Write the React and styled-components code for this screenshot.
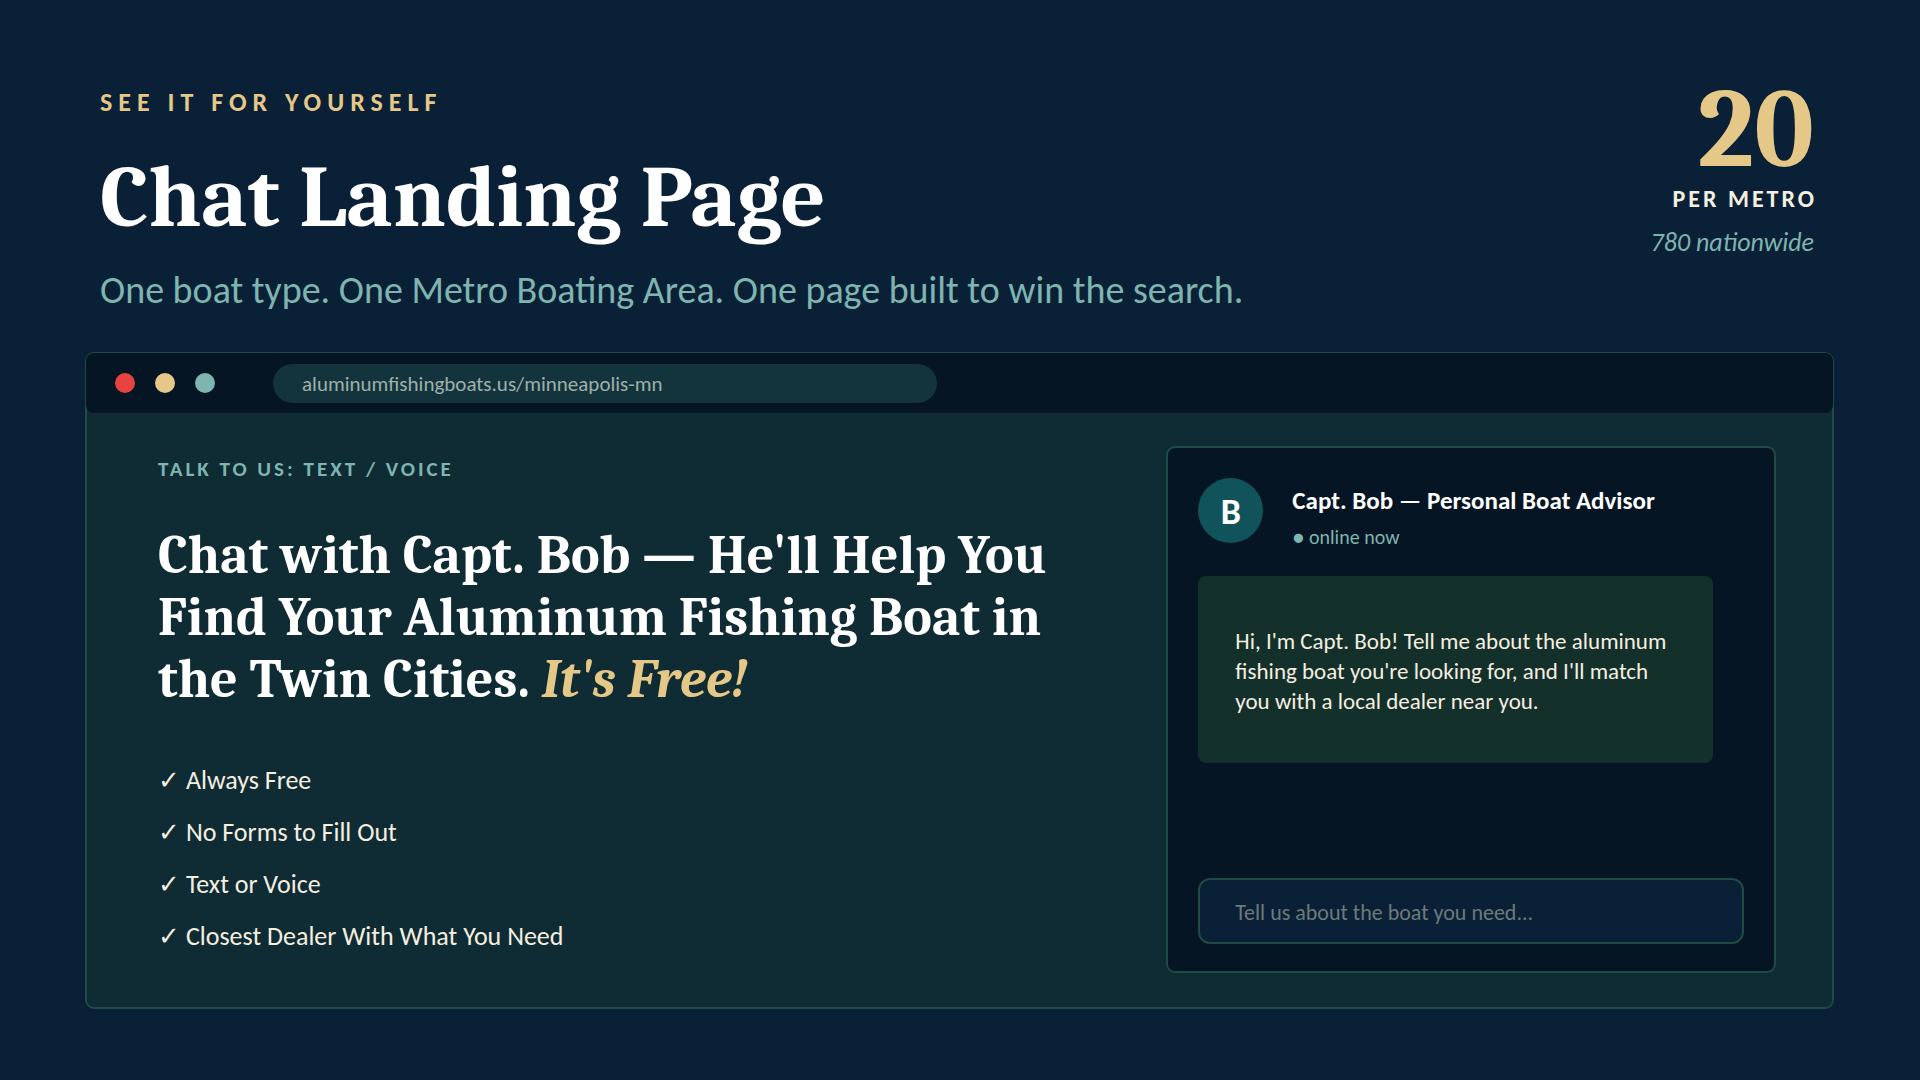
import React, {useState} from "react";
import styled, {createGlobalStyle} from "styled-components";

const GlobalStyle = createGlobalStyle`
    * {
        box-sizing: border-box;
    }

    body {
        margin: 0;
        background: #0a2036;
    }
`;

const sans = `Carlito, Calibri, Lato, sans-serif`;
const serif = `Caladea, Cambria, "Liberation Serif", serif`;

const Root = styled.div`
    display: flex;
    flex-direction: column;
    min-height: 100vh;
    padding: 76px 86px 71px 85px;

    background: #0a2036;
    color: #ffffff;
    font-family: ${sans};
`;

const Header = styled.header`
    display: flex;
    justify-content: space-between;
    padding: 0 20px 0 15px;
    margin-bottom: 39px;
`;

const Intro = styled.div`
    padding-top: 10px;
`;

const Kicker = styled.p`
    margin: 0;

    color: ${props => props.$gold ? "#e5c888" : "#7fb5b0"};
    font-size: ${props => props.$gold ? 26 : 21}px;
    font-weight: 700;
    line-height: ${props => props.$gold ? 32 : 28}px;
    letter-spacing: ${props => props.$gold ? 6 : 3}px;
`;

const Title = styled.h1`
    margin: 24px 0 13px;

    font-family: ${serif};
    font-size: 88px;
    font-weight: 700;
    line-height: 112px;
`;

const Subtitle = styled.p`
    margin: 0;

    color: #7fb5b0;
    font-size: 38px;
    line-height: 46px;
`;

const Stat = styled.div`
    display: flex;
    flex-direction: column;
    align-items: flex-end;
`;

const StatNumber = styled.div`
    color: #e5c888;
    font-family: ${serif};
    font-size: 112px;
    font-weight: 700;
    line-height: 108px;
`;

const StatLabel = styled.div`
    /* drops the space after the last letter */
    margin-right: -3px;

    color: #f5efe0;
    font-size: 24px;
    font-weight: 700;
    line-height: 30px;
    letter-spacing: 3px;
`;

const StatNote = styled.div`
    margin-top: 12px;

    color: #7fb5b0;
    font-size: 26px;
    font-style: italic;
    line-height: 32px;
`;

const Browser = styled.main`
    display: flex;
    flex: 1;
    flex-direction: column;

    background: #0f2b33;
    border: 2px solid #1f4a45;
    border-radius: 9px;
`;

const BrowserBar = styled.div`
    display: flex;
    align-items: center;
    height: 60px;
    margin: -1px -1px 0;

    background: #051523;
    border-radius: 8px;
`;

const Lights = styled.div`
    display: flex;
    gap: 20px;
    margin: 0 58px 0 29px;
`;

const Dot = styled.span`
    width: 20px;
    height: 20px;

    background: ${props => props.$color};
    border-radius: 50%;
`;

const Address = styled.input`
    width: 38%;
    height: 39px;
    padding: 2px 29px 0;

    background: #14343d;
    border: 0;
    border-radius: 20px;
    color: #9fb0a9;
    font-family: ${sans};
    font-size: 21px;
    outline: none;
`;

const Page = styled.div`
    display: grid;
    flex: 1;
    grid-template-columns: 14fr 9fr;
    gap: 60px;
    padding: 33px 56px 34px 71px;
`;

const Pitch = styled.section`
    padding-top: 9px;
`;

const Headline = styled.h2`
    max-width: 920px;
    margin: 42px 0 43px;

    font-family: ${serif};
    font-size: 54px;
    font-weight: 700;
    line-height: 62px;

    em {
        color: #e5c888;
    }
`;

const Checklist = styled.ul`
    margin: 0;
    padding: 0;

    color: #f5efe0;
    font-size: 26px;
    line-height: 52px;
    list-style: none;
`;

const Chat = styled.section`
    display: flex;
    flex-direction: column;
    padding: 30px 30px 27px;

    background: #051523;
    border: 2px solid #1f4a45;
    border-radius: 9px;
`;

const Advisor = styled.div`
    display: flex;
    gap: 29px;
`;

const Avatar = styled.div`
    display: flex;
    align-items: center;
    justify-content: center;
    width: 65px;
    height: 65px;
    padding-top: 2px;

    background: #10535a;
    border-radius: 50%;
    font-size: 36px;
    font-weight: 700;
`;

const AdvisorText = styled.div`
    padding-top: 8px;
`;

const AdvisorName = styled.h3`
    margin: 0 0 8px;

    font-size: 25px;
    font-weight: 700;
    line-height: 30px;
`;

const Status = styled.p`
    margin: 0;

    color: #7fb5b0;
    font-size: 20px;
    line-height: 26px;
`;

const Message = styled.div`
    display: flex;
    align-items: center;
    min-height: 187px;
    margin: 26px 31px 0 0;
    padding: 2px 37px 0;

    background: #14302b;
    border-radius: 8px;
    color: #f5efe0;
    font-size: 23px;
    line-height: 30px;
`;

const ChatInput = styled.input`
    width: 100%;
    height: 66px;
    margin-top: auto;
    padding: 2px 35px 0;

    background: #0a2036;
    border: 2px solid #1f4a45;
    border-radius: 12px;
    color: #f5efe0;
    font-family: ${sans};
    font-size: 22px;
    outline: none;

    &::placeholder {
        color: #6c7b7a;
        opacity: 1;
    }
`;

const benefits = [
    "Always Free",
    "No Forms to Fill Out",
    "Text or Voice",
    "Closest Dealer With What You Need",
];

export default function App() {

    const [text, setText] = useState("");

    return (
        <Root>
            <GlobalStyle/>

            <Header>
                <Intro>
                    <Kicker $gold>SEE IT FOR YOURSELF</Kicker>
                    <Title>Chat Landing Page</Title>
                    <Subtitle>One boat type. One Metro Boating Area. One page built to win the search.</Subtitle>
                </Intro>

                <Stat>
                    <StatNumber>20</StatNumber>
                    <StatLabel>PER METRO</StatLabel>
                    <StatNote>780 nationwide</StatNote>
                </Stat>
            </Header>

            <Browser>
                <BrowserBar>
                    <Lights>
                        <Dot $color="#e84340"/>
                        <Dot $color="#e5c888"/>
                        <Dot $color="#7fb5b0"/>
                    </Lights>
                    <Address aria-label="Address" readOnly value="aluminumfishingboats.us/minneapolis-mn"/>
                </BrowserBar>

                <Page>
                    <Pitch>
                        <Kicker>TALK TO US: TEXT / VOICE</Kicker>
                        <Headline>
                            Chat with Capt. Bob — He'll Help You Find Your Aluminum Fishing Boat in
                            the Twin Cities. <em>It's Free!</em>
                        </Headline>
                        <Checklist>
                            {benefits.map(benefit => <li key={benefit}>✓ {benefit}</li>)}
                        </Checklist>
                    </Pitch>

                    <Chat>
                        <Advisor>
                            <Avatar>B</Avatar>
                            <AdvisorText>
                                <AdvisorName>Capt. Bob — Personal Boat Advisor</AdvisorName>
                                <Status>● online now</Status>
                            </AdvisorText>
                        </Advisor>

                        <Message>
                            Hi, I'm Capt. Bob! Tell me about the aluminum fishing boat you're looking
                            for, and I'll match you with a local dealer near you.
                        </Message>

                        <ChatInput
                            aria-label="Message"
                            placeholder="Tell us about the boat you need..."
                            value={text}
                            onChange={e => setText(e.target.value)}
                        />
                    </Chat>
                </Page>
            </Browser>
        </Root>
    );
};
